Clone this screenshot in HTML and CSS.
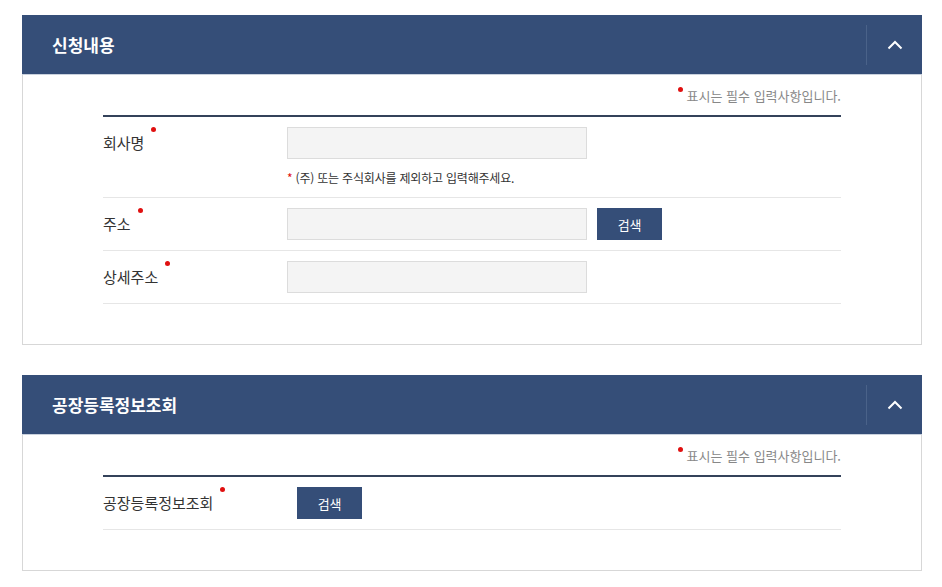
FILE: index.html
```html
<!DOCTYPE html>
<html lang="ko">
<head>
<meta charset="utf-8">
<title>신청내용</title>
<link rel="stylesheet" href="styles.css">
</head>
<body>
<div class="page">
  <section class="panel">
    <header class="panel-head">
      <h2 class="panel-title">신청내용</h2>
      <button class="toggle" type="button" aria-label="접기">
        <svg width="16" height="10" viewBox="0 0 16 10"><path d="M1.5 8.5 L8 2 L14.5 8.5" fill="none" stroke="#fff" stroke-width="2"/></svg>
      </button>
    </header>
    <div class="panel-body">
      <p class="req-note"><span class="dot"></span>표시는 필수 입력사항입니다.</p>
      <div class="form">
        <div class="row">
          <div class="label">회사명<span class="dot"></span></div>
          <div class="field">
            <input class="input" type="text">
            <p class="hint"><span class="star">*</span> (주) 또는 주식회사를 제외하고 입력해주세요.</p>
          </div>
        </div>
        <div class="row">
          <div class="label">주소<span class="dot"></span></div>
          <div class="field inline">
            <input class="input" type="text">
            <button class="btn" type="button">검색</button>
          </div>
        </div>
        <div class="row">
          <div class="label">상세주소<span class="dot"></span></div>
          <div class="field">
            <input class="input" type="text">
          </div>
        </div>
      </div>
    </div>
  </section>

  <section class="panel">
    <header class="panel-head">
      <h2 class="panel-title">공장등록정보조회</h2>
      <button class="toggle" type="button" aria-label="접기">
        <svg width="16" height="10" viewBox="0 0 16 10"><path d="M1.5 8.5 L8 2 L14.5 8.5" fill="none" stroke="#fff" stroke-width="2"/></svg>
      </button>
    </header>
    <div class="panel-body">
      <p class="req-note"><span class="dot"></span>표시는 필수 입력사항입니다.</p>
      <div class="form">
        <div class="row">
          <div class="label wide">공장등록정보조회<span class="dot"></span></div>
          <div class="field">
            <button class="btn" type="button">검색</button>
          </div>
        </div>
      </div>
    </div>
  </section>
</div>
</body>
</html>
```

FILE: styles.css
```css
* { box-sizing: border-box; }
html, body { margin: 0; padding: 0; background: #fff; }
body {
  font-family: "Noto Sans CJK KR", "Noto Sans", sans-serif;
  color: #333;
}
.page {
  padding: 15px 20px 0 22px;
}
.panel {
  width: 900px;
  margin-bottom: 30px;
}
.panel-head {
  height: 60px;
  background: #354e78;
  display: flex;
  align-items: center;
  justify-content: space-between;
  border-bottom: 1px solid #c9d1dd;
}
.panel-title {
  margin: 0;
  padding-left: 30px;
  color: #fff;
  font-size: 17px;
  font-weight: 700;
  letter-spacing: 0;
  line-height: 24px;
}
.toggle {
  width: 56px;
  height: 40px;
  margin: 0;
  padding: 0;
  background: transparent;
  border: 0;
  border-left: 1px solid #4a6289;
  display: flex;
  align-items: center;
  justify-content: center;
  cursor: pointer;
}
.toggle svg { display: block; }
.panel-body {
  border: 1px solid #d7d7d7;
  border-top: 0;
  padding: 10px 80px 40px 80px;
}
.req-note {
  margin: 0 0 8px;
  text-align: right;
  font-size: 13px;
  letter-spacing: 0;
  line-height: 22px;
  color: #888;
}
.req-note .dot { margin: 0 4px 0 0; vertical-align: 9px; }
.dot {
  display: inline-block;
  width: 5px;
  height: 5px;
  border-radius: 50%;
  background: #e01010;
  margin-left: 7px;
  vertical-align: 17px;
}
.form {
  border-top: 2px solid #34425a;
}
.row {
  display: flex;
  align-items: flex-start;
  padding: 10px 0;
  border-bottom: 1px solid #e6e6e6;
}
.label {
  width: 184px;
  flex: none;
  font-size: 15px;
  letter-spacing: 0;
  line-height: 32px;
  color: #333;
}
.label.wide { width: 194px; }
.field.inline {
  display: flex;
  gap: 10px;
}
.input {
  display: block;
  width: 300px;
  height: 32px;
  margin: 0;
  background: #f4f4f4;
  border: 1px solid #dcdcdc;
  font: inherit;
}
.hint {
  margin: 10px 0 0;
  font-size: 12px;
  letter-spacing: -0.2px;
  line-height: 18px;
  color: #333;
}
.star { color: #e01010; }
.btn {
  width: 65px;
  height: 32px;
  margin: 0;
  padding: 0;
  background: #354e78;
  border: 0;
  color: #fff;
  font-family: inherit;
  font-size: 13px;
  letter-spacing: -0.3px;
  cursor: pointer;
}
```
